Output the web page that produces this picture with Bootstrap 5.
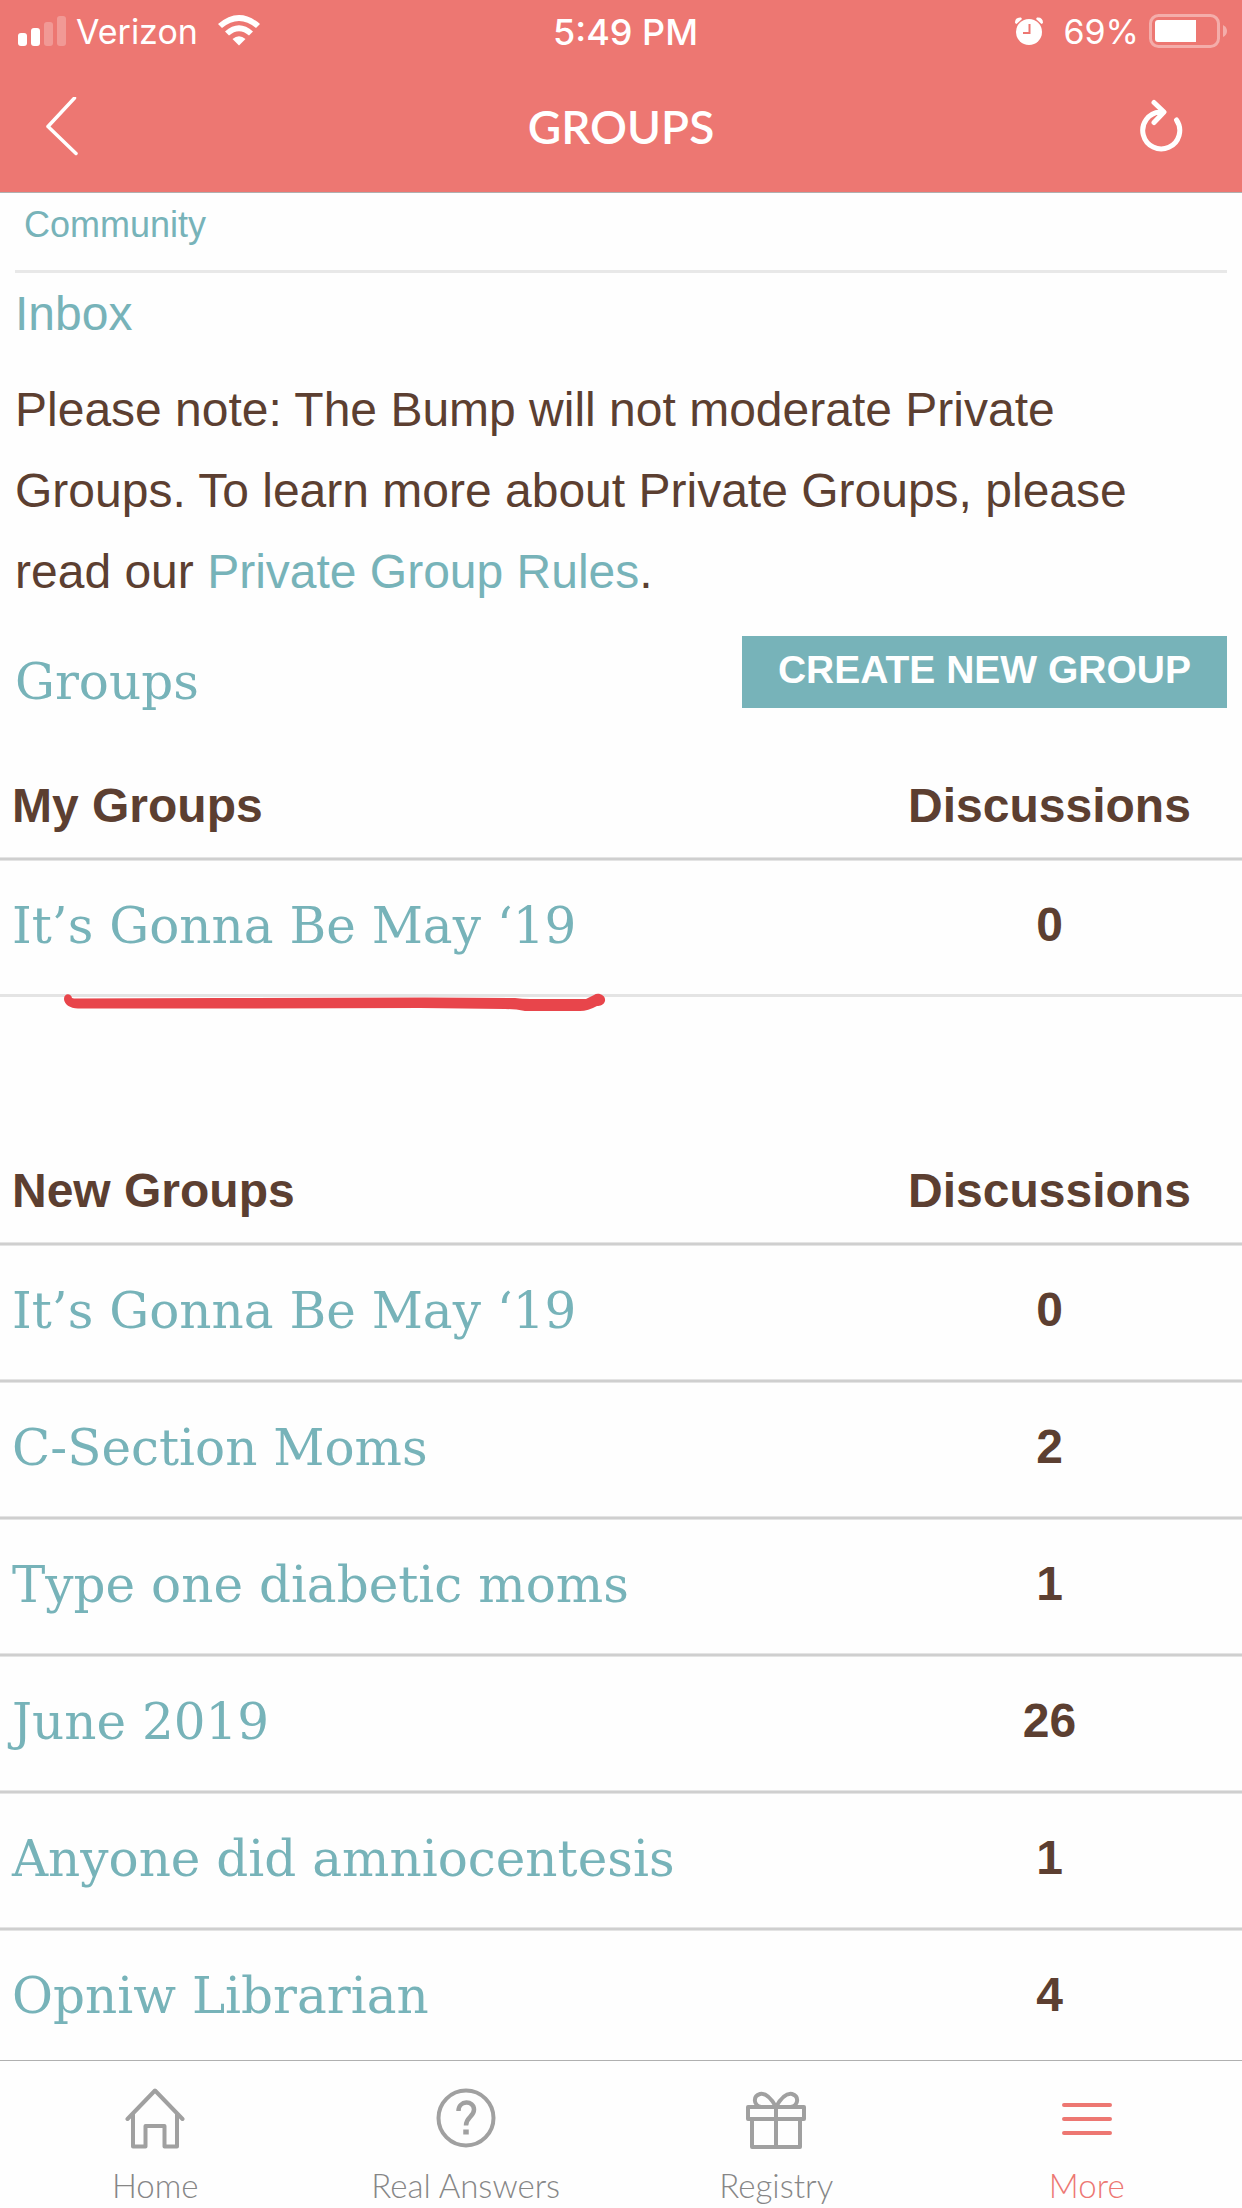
<!DOCTYPE html>
<html lang="en">
<head>
<meta charset="utf-8">
<meta name="viewport" content="width=device-width, initial-scale=1">
<title>Groups</title>
<link href="https://cdn.jsdelivr.net/npm/bootstrap@5.3.0/dist/css/bootstrap.min.css" rel="stylesheet">
<style>
  :root { --coral: #ed7772; --teal: #77b3b9; --brown: #5c3f31; --tab: #868686; }
  body { font-family: "Liberation Sans", Arial, sans-serif; font-size: 48px; line-height: 81px; color: var(--brown); background: #fefefe; }
  a { color: var(--teal); text-decoration: none; }
  a:hover { color: var(--teal); text-decoration: underline; }
  svg { display: block; }
  .app-header { background: var(--coral); color: #fff; border-bottom: 1px solid #b0b0b0; }
  .status-bar { height: 64px; padding: 0 15px 0 18px; font: 400 34px/64px Inter, sans-serif; }
  .status-bar > div { flex: 1 1 0; }
  .status-bar .clock { font-size: 36px; font-weight: 500; padding-left: 6px; }
  .carrier { margin: 0 20px 0 10px; }
  .charge { margin: 0 10px 0 20px; }
  .title-bar { height: 128px; padding: 0 59px 2px 45px; }
  .title-bar h1 { font: 600 46px/64px Lato, sans-serif; }
  .icon-btn { background: none; border: 0; padding: 0; color: inherit; }
  .page-main { min-height: 0; overflow-y: auto; scrollbar-width: none; }
  .page-main::-webkit-scrollbar { display: none; }
  .crumb { margin: 0 15px; padding: 5px 9px 18px; font-size: 36px; line-height: 54px; border-bottom: 3px solid #e8e8e8; }
  .intro { padding: 0 15px; }
  .intro p { margin: 15px 0 24px; }
  .slab { font-family: "DejaVu Serif", serif; font-weight: 400; font-size: 50px; line-height: 72px; }
  .group-head { padding: 0 15px; margin-bottom: 36px; }
  .group-head h2 { padding-top: 10px; color: var(--teal); }
  .btn-create { --bs-btn-color: #fff; --bs-btn-bg: var(--teal); --bs-btn-border-width: 0; --bs-btn-border-radius: 0; --bs-btn-hover-color: #fff; --bs-btn-hover-bg: #68a5ab;
    --bs-btn-font-size: 39px; --bs-btn-font-weight: 700; --bs-btn-line-height: 42px; padding: 13px 36px 17px; }
  .group-table { border-collapse: separate; border-spacing: 0; table-layout: fixed; width: 100%; }
  .group-table th, .group-table td { padding: 0 12px; font-weight: 700; }
  .group-table th:last-child, .group-table td:last-child { width: 31%; text-align: center; padding: 0; }
  .group-table thead th { height: 103px; }
  .group-table tbody td { height: 137px; border-top: 1px solid #e4e4e4; box-shadow: inset 0 2px #cfcfcf, inset 0 3px #e4e4e4; }
  .group-table tbody td:last-child { padding-bottom: 4px; }
  .group-table td .slab { display: block; }
  .my-groups { border-bottom: 3px solid #e4e4e4; margin-bottom: 142px; }
  .marker { position: absolute; left: 60px; bottom: -20px; }
  .tab-bar { height: 148px; border-top: 1px solid #b0b0b0; font: 300 33px/40px Lato, sans-serif; padding-top: 20px; }
  .tab-bar a { flex: 1 1 0; color: var(--tab); }
  .tab-bar a.active { color: var(--coral); }
  .tab-bar svg { margin: 0 auto 14px; }
</style>
</head>
<body>
<div class="vh-100 d-flex flex-column overflow-hidden">
  <header class="app-header">
    <div class="status-bar d-flex align-items-center">
      <div class="d-flex align-items-center">
        <svg width="48" height="32" viewBox="0 0 48 32" fill="#fff" aria-hidden="true">
          <rect x="0" y="17" width="9" height="13" rx="3"/><rect x="13" y="12" width="9" height="18" rx="3"/>
          <rect x="26" y="6" width="9" height="24" rx="3" opacity=".25"/><rect x="39" y="0" width="9" height="30" rx="3" opacity=".25"/>
        </svg>
        <span class="carrier">Verizon</span>
        <svg width="42" height="34" viewBox="0 0 42 34" fill="#fff" aria-hidden="true">
          <path d="M0 9Q21-9 42 9L38 13Q21-1 4 13Z"/><path d="M7 16.500Q21 4 35 16.500L31 20.500Q21 12 11 20.500Z"/><path d="M14.500 24Q21 18.500 27.500 24L21 30.500Z"/>
        </svg>
      </div>
      <div class="clock text-center">5:49 PM</div>
      <div class="d-flex align-items-center justify-content-end">
        <svg width="28" height="32" viewBox="0 0 28 32" aria-hidden="true">
          <circle cx="14" cy="16" r="13" fill="#fff"/><path d="M14.500 8v9H8" fill="none" stroke="#ed7772" stroke-width="2"/>
          <path d="M0 7Q0 1 6 1.500L7 3 1.500 8ZM28 7Q28 1 22 1.500L21 3 26.500 8Z" fill="#fff"/>
        </svg>
        <span class="charge">69%</span>
        <svg width="78" height="36" viewBox="0 0 78 36" aria-hidden="true">
          <rect x="1.500" y="1.500" width="68" height="31" rx="8" fill="none" stroke="#fff" stroke-opacity=".4" stroke-width="3"/>
          <path d="M9 6H47V28H9Q6 28 6 25V9Q6 6 9 6Z" fill="#fff"/><path d="M74 11Q78 13 78 17T74 23Z" fill="#fff" opacity=".4"/>
        </svg>
      </div>
    </div>
    <div class="title-bar d-flex align-items-center justify-content-between">
      <button class="icon-btn" type="button" aria-label="Back">
        <svg width="60" height="60" viewBox="0 0 60 60"><path d="M29.500 1L3 29.500 31 56.500" fill="none" stroke="#fff" stroke-width="3.500" stroke-linecap="round" stroke-linejoin="round"/></svg>
      </button>
      <h1 class="m-0">GROUPS</h1>
      <button class="icon-btn" type="button" aria-label="Refresh">
        <svg width="46" height="56" viewBox="0 0 46 56"><path d="M39.500 21A18.500 18.500 0 1 1 23 13H26M17 3.500L27 13 17 23.500" fill="none" stroke="#fff" stroke-width="5" stroke-linecap="round" stroke-linejoin="round"/></svg>
      </button>
    </div>
  </header>

  <main class="page-main flex-fill">
    <nav class="crumb" aria-label="Breadcrumb"><a href="#">Community</a></nav>
    <div class="intro">
      <a class="d-block" href="#">Inbox</a>
      <p>Please note: The Bump will not moderate Private Groups. To learn more about Private Groups, please read our <a href="#">Private Group Rules</a>.</p>
    </div>
    <div class="group-head d-flex justify-content-between align-items-start">
      <h2 class="slab m-0">Groups</h2>
      <button class="btn btn-create" type="button">CREATE NEW GROUP</button>
    </div>

    <section class="my-groups position-relative">
      <table class="group-table">
        <thead><tr><th scope="col">My Groups</th><th scope="col">Discussions</th></tr></thead>
        <tbody><tr><td><a class="slab" href="#">It’s Gonna Be May ‘19</a></td><td>0</td></tr></tbody>
      </table>
      <svg class="marker" width="550" height="25" viewBox="0 0 550 25" aria-hidden="true">
        <path fill="#e8454b" d="M4 10C4 4 11 4 12 9L14 9.500 160 9 365 8.500 455 9Q462 10 470 10L526 10Q530 8 534 6C538 3 546 6 545 12 544 16 540 17 537 17Q528 22 520 22L465 22Q455 20 445 20L360 19 160 19.500 18 19.500C10 19.500 4 15 4 10Z"/>
      </svg>
    </section>

    <section>
      <table class="group-table">
        <thead><tr><th scope="col">New Groups</th><th scope="col">Discussions</th></tr></thead>
        <tbody>
          <tr><td><a class="slab" href="#">It’s Gonna Be May ‘19</a></td><td>0</td></tr>
          <tr><td><a class="slab" href="#">C-Section Moms</a></td><td>2</td></tr>
          <tr><td><a class="slab" href="#">Type one diabetic moms</a></td><td>1</td></tr>
          <tr><td><a class="slab" href="#">June 2019</a></td><td>26</td></tr>
          <tr><td><a class="slab" href="#">Anyone did amniocentesis</a></td><td>1</td></tr>
          <tr><td><a class="slab" href="#">Opniw Librarian</a></td><td>4</td></tr>
        </tbody>
      </table>
    </section>
  </main>

  <nav class="tab-bar d-flex flex-shrink-0 text-center" aria-label="Main">
    <a href="#">
      <svg width="60" height="70" viewBox="0 0 60 70" fill="none" stroke="#a0a0a0" stroke-width="4" stroke-linecap="round" stroke-linejoin="round"><path d="M2.500 38L30 9.500 57.500 38M8 33V65.500H20.500V45H39.500V65.500H52V33"/></svg>Home</a>
    <a href="#">
      <svg width="60" height="70" viewBox="0 0 60 70" fill="none" stroke="#a0a0a0"><circle cx="30" cy="37" r="27.500" stroke-width="4"/><path d="M22.500 30C22.500 19 38 19 38 28.500 38 36 30 36 30 44.500" stroke-width="4.500"/><path d="M30 48.500v5" stroke-width="5.500"/></svg>Real Answers</a>
    <a href="#">
      <svg width="60" height="70" viewBox="0 0 60 70" fill="none" stroke="#a0a0a0" stroke-width="4" stroke-linejoin="round"><path d="M2 26H58V38H2ZM6 38V66H54V38M30 26V66M30 26C25 17 19 12 14 13 7 15 7 24 15 26M30 26C35 17 41 12 46 13 53 15 53 24 45 26"/></svg>Registry</a>
    <a href="#" class="active" aria-current="page">
      <svg width="60" height="70" viewBox="0 0 60 70" stroke="#ed7772" stroke-width="4" stroke-linecap="round"><path d="M7 24H53M7 38H53M7 52H53"/></svg>More</a>
  </nav>
</div>
<script src="https://cdn.jsdelivr.net/npm/bootstrap@5.3.0/dist/js/bootstrap.bundle.min.js"></script>
</body>
</html>
